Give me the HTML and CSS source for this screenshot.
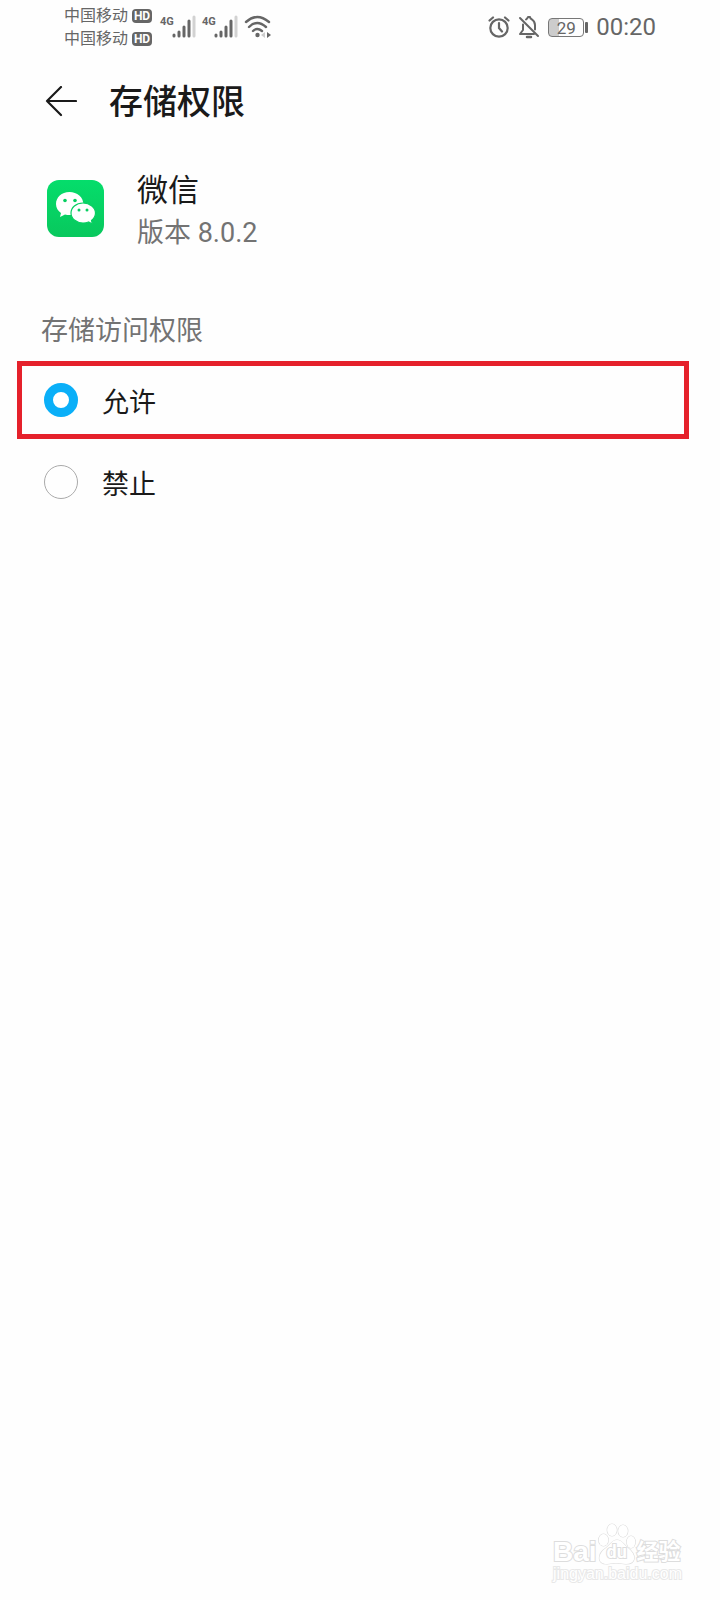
FILE: index.html
```html
<!DOCTYPE html>
<html lang="zh-CN">
<head>
<meta charset="utf-8">
<meta name="viewport" content="width=device-width, initial-scale=1">
<title>存储权限</title>
<link rel="stylesheet" href="styles.css">
</head>
<body>
<div class="screen">
  <div class="status">
    <div class="carriers">
      <div class="carrier"><span>中国移动</span><b class="hd">HD</b></div>
      <div class="carrier"><span>中国移动</span><b class="hd">HD</b></div>
    </div>
    <div class="signal">
      <span class="net">4G</span>
      <svg width="24" height="24" viewBox="0 0 24 24" stroke="#666" stroke-width="3" stroke-linecap="round"><path d="M2 21v-1M7 21v-4M12 21v-9M17 21V6"/><path d="M22 21V2" stroke="#d2d2d2"/></svg>
    </div>
    <div class="signal">
      <span class="net">4G</span>
      <svg width="24" height="24" viewBox="0 0 24 24" stroke="#666" stroke-width="3" stroke-linecap="round"><path d="M2 21v-1M7 21v-4M12 21v-9M17 21V6"/><path d="M22 21V2" stroke="#d2d2d2"/></svg>
    </div>
    <svg class="wifi" width="28" height="24" viewBox="0 0 28 24" fill="none" stroke="#666" stroke-width="2.4" stroke-linecap="round"><path d="M2 7Q13-3 25 7M5 12Q13 4 22 12M9 16Q13 12 18 16"/><circle cx="13.500" cy="20" r="2.200" fill="#666" stroke="none"/><path d="M23 17v6l4-3z" fill="#666" stroke="none"/><path d="M21 17v6l-4-3z" fill="#ccc" stroke="none"/></svg>
    <div class="status-right">
      <svg width="22" height="24" viewBox="0 0 22 24" fill="none" stroke="#666" stroke-width="2.200" stroke-linecap="round"><circle cx="11" cy="13" r="8.700"/><path d="M11 8v5l3 3.500M1.500 5.500L5 2.500M20.500 5.500L17 2.500"/></svg>
      <svg width="22" height="24" viewBox="0 0 22 24" fill="none" stroke="#666" stroke-width="2" stroke-linecap="round" stroke-linejoin="round"><path d="M2 3l18 18M5 9.500V15l-3 4h14M8 4.500Q9.500 3.500 10 2h2Q12 3.500 14 4.500Q17 6.500 17 10v4.500"/><path d="M9 22h4" stroke-width="2.500"/></svg>
      <div class="battery"><span>29</span></div>
      <span class="clock">00:20</span>
    </div>
  </div>

  <header class="header">
    <button class="back" type="button" aria-label="返回"><svg width="32" height="32" viewBox="0 0 32 32" fill="none" stroke="#1a1a1a" stroke-width="2.200" stroke-linecap="round" stroke-linejoin="round"><path d="M31 15H2M16 1L2 15l14 14"/></svg></button>
    <h1>存储权限</h1>
  </header>

  <section class="app">
    <svg width="57" height="57" viewBox="0 0 57 57"><defs><linearGradient id="green" x1="0" y1="0" x2="0" y2="1"><stop stop-color="#05dd6b"/><stop offset="1" stop-color="#08c85d"/></linearGradient></defs><rect width="57" height="57" rx="12" fill="url(#green)"/><path d="M22.500 12C14.500 12 9 17.500 9 24c0 4 2 7 5 9l-1 4 5-2.500c2 .5 4 .8 7 .5C34 35 36.500 30 36.500 25 36.500 17 30 12 22.500 12z" fill="#fff"/><path d="M36 23C29 23 24 27.500 24 33s5 10 12 10c2 0 4-.3 5.500-1l4 2-1-3.500C47 38.500 48.500 36 48.500 33 48.500 27.500 43 23 36 23z" fill="#fff" stroke="#07cf61" stroke-width="1.200"/><g fill="#07cf61"><circle cx="18" cy="20.500" r="1.800"/><circle cx="28" cy="20.500" r="1.800"/><circle cx="32" cy="30" r="1.500"/><circle cx="40" cy="30" r="1.500"/></g></svg>
    <div class="app-text">
      <div class="app-name">微信</div>
      <div class="app-version">版本 8.0.2</div>
    </div>
  </section>

  <fieldset class="options">
    <legend>存储访问权限</legend>
    <label class="option highlighted"><input type="radio" name="storage" checked><span>允许</span></label>
    <label class="option"><input type="radio" name="storage"><span>禁止</span></label>
  </fieldset>

  <footer class="watermark">
    <div class="brand">
      <span class="latin">Bai</span>
      <span class="paw"><svg width="38" height="42" viewBox="0 0 38 42" fill="#fff" stroke="#ddd" stroke-width="1.200"><ellipse cx="5.500" cy="17" rx="4.800" ry="6"/><ellipse cx="14" cy="7" rx="4.800" ry="6"/><ellipse cx="25" cy="8" rx="4.800" ry="6"/><ellipse cx="33" cy="19" rx="4.300" ry="6"/><path d="M19 17c-5 0-7 5-11 8-9 6-9 16 1 16 4-1 14-1 19 0 10 0 11-9 2-16-5-4-6-8-11-8z"/></svg><span class="du">du</span></span>
      <span class="cjk">经验</span>
    </div>
    <div class="site">jingyan.baidu.com</div>
  </footer>
</div>
</body>
</html>
```
FILE: styles.css
```css
* { box-sizing: border-box; }
body {
  margin: 0;
  background: #fefefe;
  color: #1a1a1a;
  font-family: Roboto, "Noto Sans CJK SC", sans-serif;
}
.screen { display: flex; flex-direction: column; min-height: 100vh; }

.status {
  display: flex;
  align-items: center;
  height: 54px;
  padding: 0 64px;
  color: #666;
}
.carriers { margin-right: 8px; }
.carrier { display: flex; align-items: center; gap: 4px; font-size: 16px; line-height: 23px; }
.hd {
  width: 20px;
  border-radius: 4px;
  background: #666;
  color: #fff;
  font-size: 12px;
  line-height: 14px;
  text-align: center;
}
.signal { display: flex; align-items: center; margin-right: 6px; }
.net { align-self: flex-start; width: 12px; font-size: 11px; font-weight: 700; line-height: 13px; }
.signal svg { flex: none; }
.status-right { display: flex; align-items: center; gap: 8px; margin-left: auto; }
.battery {
  position: relative;
  width: 36px;
  height: 19px;
  margin-right: 4px;
  border: 1px solid #777;
  border-radius: 4px;
  background: linear-gradient(90deg, #ccc 29%, transparent 29%);
  font-size: 17px;
  line-height: 18px;
  text-align: center;
}
.battery::after {
  content: "";
  position: absolute;
  top: 3px;
  right: -5px;
  width: 3px;
  height: 11px;
  border-radius: 1px;
  background: #666;
}
.clock { font-size: 24px; line-height: 28px; }

.header { display: flex; align-items: center; gap: 32px; height: 96px; padding: 0 45px; }
.back { width: 32px; height: 32px; padding: 0; border: 0; background: none; }
.back svg { display: block; }
h1 { margin: 0; font-size: 34px; font-weight: 500; line-height: 44px; }

.app { display: flex; align-items: flex-start; gap: 33px; padding: 20px 47px 0; }
.app svg { margin-top: 10px; }
.app-name { font-size: 31px; line-height: 42px; }
.app-version { color: #737373; font-size: 27px; line-height: 42px; }

.options { min-width: 0; margin: 57px 0 0; padding: 0 31px 0 17px; border: 0; }
.options legend { padding: 0 24px; margin-bottom: 10px; color: #737373; font-size: 27px; line-height: 40px; }
.option {
  display: flex;
  align-items: center;
  gap: 24px;
  height: 78px;
  margin-bottom: 4px;
  padding: 0 22px;
  border: 5px solid transparent;
  font-size: 27px;
}
.highlighted { border-color: #e5212b; }
.option input {
  appearance: none;
  width: 34px;
  height: 34px;
  margin: 0;
  border: 1px solid #aaa;
  border-radius: 50%;
}
.option input:checked { border: 9px solid #0aaff8; background: #fff; }

.watermark { margin-top: auto; margin-left: auto; padding: 0 38px 17px 0; color: #fff; -webkit-text-stroke: 2px #ddd; paint-order: stroke fill; }
.brand { display: flex; align-items: flex-end; gap: 1px; font-weight: 700; }
.latin { font-family: "Liberation Sans", sans-serif; font-size: 28px; line-height: 26px; }
.paw { position: relative; display: block; height: 42px; }
.du { position: absolute; left: 0; right: 0; bottom: 3px; text-align: center; font-size: 18px; line-height: 20px; }
.cjk { font-size: 22px; line-height: 26px; }
.site { font-family: "Liberation Sans", sans-serif; font-size: 16px; line-height: 18px; -webkit-text-stroke: 2px #e8e8e8; }
```
